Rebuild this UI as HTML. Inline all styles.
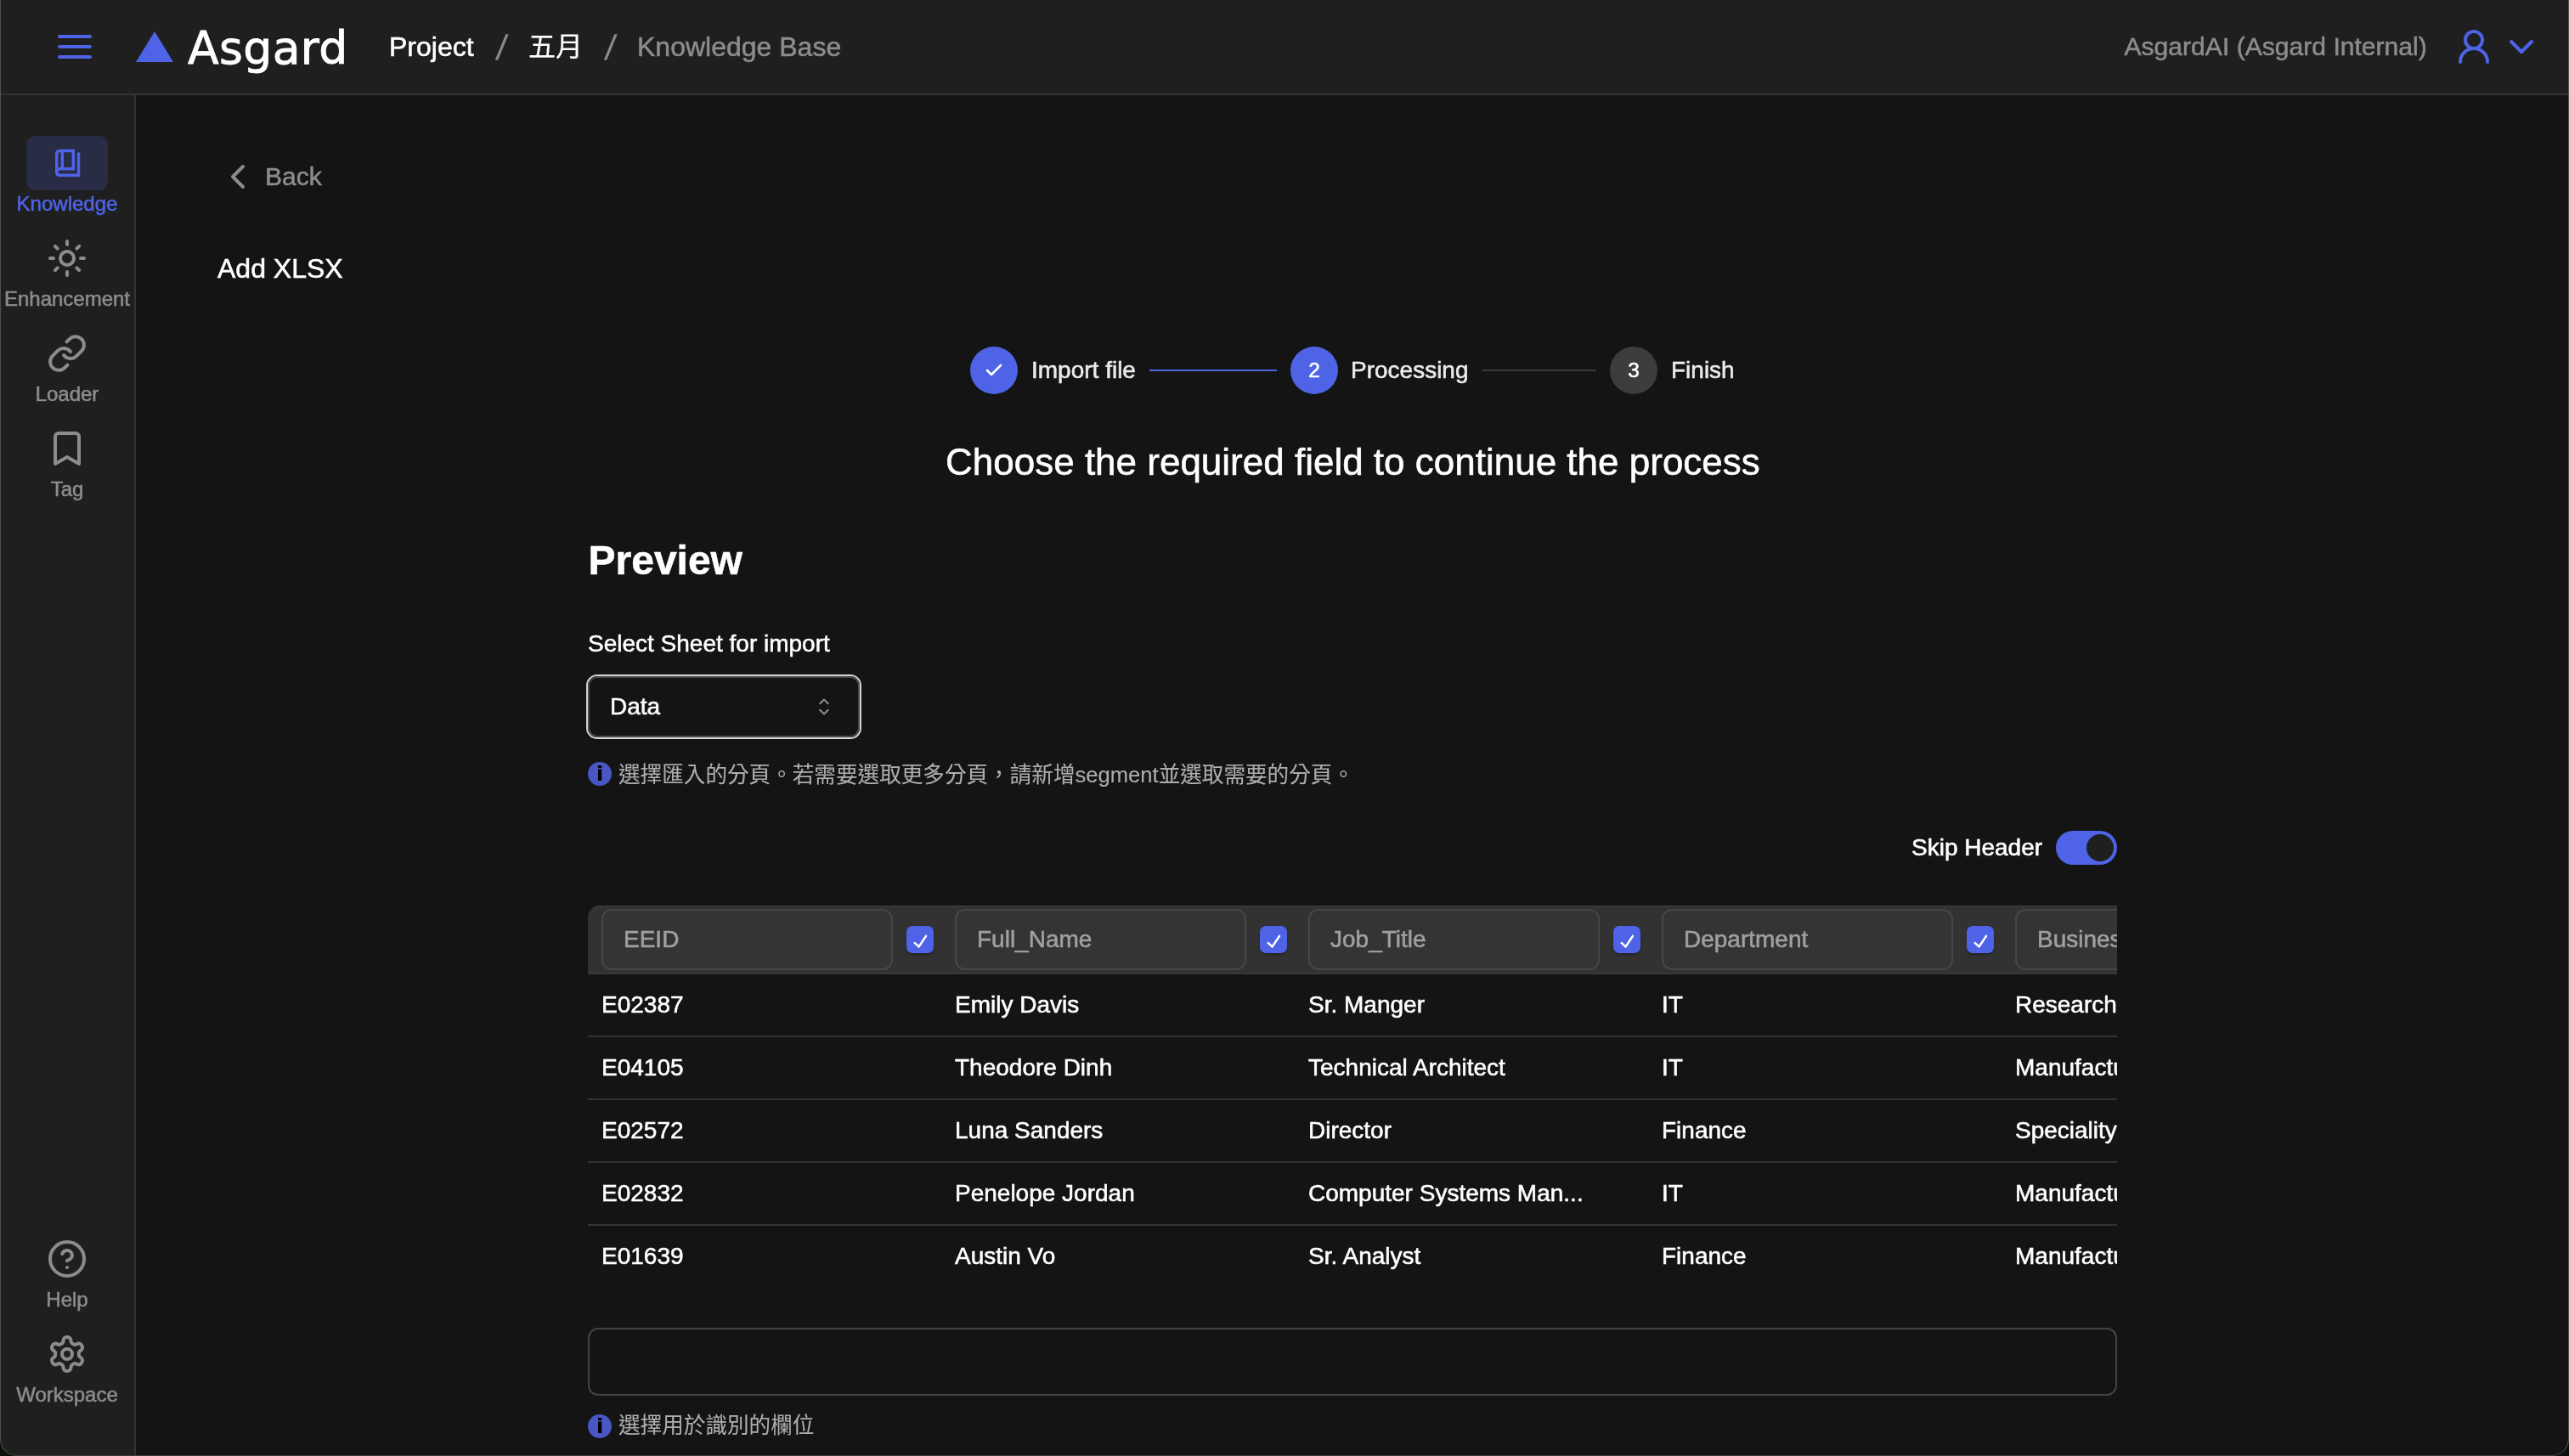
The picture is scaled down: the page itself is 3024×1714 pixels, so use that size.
<!DOCTYPE html>
<html lang="zh-Hant">
<head>
<meta charset="utf-8">
<title>Asgard - Knowledge Base</title>
<style>
*{box-sizing:border-box;margin:0;padding:0}
html,body{width:3024px;height:1714px;overflow:hidden;background:#0a120a}
body{font-family:"Liberation Sans","Noto Sans CJK TC",sans-serif;color:#fff;position:relative}
#win{position:absolute;left:0;top:0;width:3024px;height:1714px;background:#141414;overflow:hidden;border-radius:0 0 20px 20px}
#winb{position:absolute;left:0;top:-30px;width:3024px;height:1744px;border:1px solid #505050;border-bottom-color:#3c3c3c;border-top:none;border-radius:0 0 20px 20px;z-index:50;pointer-events:none}
.t{position:absolute;line-height:1;white-space:nowrap}
#win{-webkit-text-stroke:0.55px currentColor;will-change:transform}
.g{color:#8c8c8c}
svg{position:absolute;overflow:visible}
.ic{fill:none;stroke:#8c8c8c;stroke-width:2;stroke-linecap:round;stroke-linejoin:round}
.bl{stroke:#4e63e6}
#hdr{position:absolute;left:0;top:0;width:3024px;height:112px;background:#1f1f1f;border-bottom:2px solid #333}
#side{position:absolute;left:0;top:112px;width:160px;height:1602px;background:#1f1f1f;border-right:2px solid #333}
.sl{position:absolute;left:0;width:158px;text-align:center;font-size:24px;line-height:1;color:#8c8c8c}
.stc{position:absolute;top:408px;width:56px;height:56px;border-radius:50%;color:#fff;font-size:24.5px;line-height:56px;text-align:center}
.st{top:421.6px;font-size:28px;color:#ebebeb}
.stl{position:absolute;top:435px;height:2px}
#sel{position:absolute;left:690px;top:794px;width:324px;height:76px;border-radius:13px;border:2px solid #d4d4d4}
#seli{position:absolute;left:0;top:0;right:0;bottom:0;border-radius:11px;border:2px solid #4a4a4a}
.inf{font-size:25.6px;color:#adadad;line-height:28px;-webkit-text-stroke:0.1px currentColor}
#tbl{position:absolute;left:692px;top:1066px;width:1800px;height:460px;overflow:hidden;border-radius:14px 0 0 0}
#th{position:absolute;left:0;top:0;width:1800px;height:81px;background:#323232;border-top:2px solid #393939;border-bottom:2px solid #393939}
.hi{position:absolute;top:4px;width:343px;height:72px;border:2px solid #474747;border-radius:12px;background:#343434;font-size:28px;color:#a0a0a0;line-height:1;white-space:nowrap}
.hi span{position:absolute;left:24px;top:20px}
.cb{position:absolute;top:24px;width:32px;height:32px;border-radius:7px;background:#4e63e6}
.cb{box-shadow:0 2px 3px rgba(0,0,0,.25)}
.cb svg{left:0;top:0;fill:none;stroke:#fff;stroke-width:2.4}
.tr{position:absolute;left:0;width:1800px;height:74px;border-bottom:2px solid #333;font-size:28px}
.tr b{position:absolute;top:22.3px;font-weight:normal;line-height:1;white-space:nowrap}
</style>
</head>
<body>
<div id="win">

<!-- HEADER -->
<div id="hdr">
  <svg class="ic bl" style="left:64px;top:31px" width="48" height="48" viewBox="0 0 24 24"><path d="M3 6h18M3 12h18M3 18h18"/></svg>
  <svg style="left:160px;top:37px" width="44" height="36" viewBox="0 0 44 36"><path d="M22 0 L44 36 L0 36 Z" fill="#4e63e6"/></svg>
  <div class="t" id="logo" style="left:221px;top:29.6px;font-size:53.5px;letter-spacing:0.4px;font-family:'DejaVu Sans',sans-serif;-webkit-text-stroke:0.9px #fff">Asgard</div>
  <div class="t" style="left:458px;top:39.3px;font-size:32px">Project</div>
  <div class="t g" style="left:584.5px;top:35.5px;font-size:41px;transform:skewX(-8deg);-webkit-text-stroke:0.15px currentColor">/</div>
  <div class="t" style="left:622px;top:39.3px;font-size:32px;-webkit-text-stroke:0.2px currentColor">五月</div>
  <div class="t g" style="left:712.5px;top:35.5px;font-size:41px;transform:skewX(-8deg);-webkit-text-stroke:0.15px currentColor">/</div>
  <div class="t g" style="left:750px;top:39.3px;font-size:32px">Knowledge Base</div>
  <div class="t g" style="left:2500.5px;top:39.6px;font-size:30.1px">AsgardAI (Asgard Internal)</div>
  <svg class="ic bl" style="left:2888px;top:31px" width="48" height="48" viewBox="0 0 24 24"><circle cx="12" cy="8" r="5"/><path d="M20 21a8 8 0 0 0-16 0"/></svg>
  <svg class="ic bl" style="left:2944px;top:31px" width="48" height="48" viewBox="0 0 24 24"><path d="m6 9 6 6 6-6"/></svg>
</div>

<!-- SIDEBAR -->
<div id="side">
  <div style="position:absolute;left:31px;top:48px;width:96px;height:64px;border-radius:10px;background:#292c45"></div>
  <svg style="left:63px;top:62px" width="34" height="36" viewBox="63 174 34 36" fill="none" stroke="#4e63e6" stroke-width="3.4" stroke-linejoin="miter"><path d="M92.5 179.5V206.3H70.5Q66.7 206.3 66.7 202.5V181.3Q66.7 177.5 70.5 177.5H86.3V198.7H70.5Q66.7 198.7 66.7 202.5"/><path d="M73.3 177.5V198.7"/></svg>
  <div class="sl" style="top:115.7px;color:#4e63e6">Knowledge</div>

  <svg class="ic" style="left:55px;top:168px" width="48" height="48" viewBox="0 0 24 24"><circle cx="12" cy="12" r="4"/><path d="M12 2v2M12 20v2M4.93 4.93l1.41 1.41M17.66 17.66l1.41 1.41M2 12h2M20 12h2M6.34 17.66l-1.41 1.41M19.07 4.93l-1.41 1.41"/></svg>
  <div class="sl" style="top:227.7px">Enhancement</div>

  <svg class="ic" style="left:55px;top:280px" width="48" height="48" viewBox="0 0 24 24"><path d="M10 13a5 5 0 0 0 7.54.54l3-3a5 5 0 0 0-7.07-7.07l-1.72 1.71"/><path d="M14 11a5 5 0 0 0-7.54-.54l-3 3a5 5 0 0 0 7.07 7.07l1.71-1.71"/></svg>
  <div class="sl" style="top:339.7px">Loader</div>

  <svg class="ic" style="left:55px;top:392px" width="48" height="48" viewBox="0 0 24 24"><path d="m19 21-7-4-7 4V5a2 2 0 0 1 2-2h10a2 2 0 0 1 2 2v16z"/></svg>
  <div class="sl" style="top:451.7px">Tag</div>

  <svg class="ic" style="left:55px;top:1346px" width="48" height="48" viewBox="0 0 24 24"><circle cx="12" cy="12" r="10"/><path d="M9.09 9a3 3 0 0 1 5.83 1c0 2-3 3-3 3"/><path d="M12 17h.01"/></svg>
  <div class="sl" style="top:1405.7px">Help</div>

  <svg class="ic" style="left:55px;top:1458px" width="48" height="48" viewBox="0 0 24 24"><path d="M12.22 2h-.44a2 2 0 0 0-2 2v.18a2 2 0 0 1-1 1.73l-.43.25a2 2 0 0 1-2 0l-.15-.08a2 2 0 0 0-2.73.73l-.22.38a2 2 0 0 0 .73 2.73l.15.1a2 2 0 0 1 1 1.72v.51a2 2 0 0 1-1 1.74l-.15.09a2 2 0 0 0-.73 2.73l.22.38a2 2 0 0 0 2.73.73l.15-.08a2 2 0 0 1 2 0l.43.25a2 2 0 0 1 1 1.73V20a2 2 0 0 0 2 2h.44a2 2 0 0 0 2-2v-.18a2 2 0 0 1 1-1.73l.43-.25a2 2 0 0 1 2 0l.15.08a2 2 0 0 0 2.73-.73l.22-.39a2 2 0 0 0-.73-2.73l-.15-.08a2 2 0 0 1-1-1.74v-.5a2 2 0 0 1 1-1.74l.15-.09a2 2 0 0 0 .73-2.73l-.22-.38a2 2 0 0 0-2.73-.73l-.15.08a2 2 0 0 1-2 0l-.43-.25a2 2 0 0 1-1-1.73V4a2 2 0 0 0-2-2z"/><circle cx="12" cy="12" r="3"/></svg>
  <div class="sl" style="top:1517.7px">Workspace</div>
</div>

<!-- MAIN -->
<div id="main">
  <!-- back -->
  <svg class="ic" style="left:256px;top:184px" width="48" height="48" viewBox="0 0 24 24"><path d="m15 18-6-6 6-6"/></svg>
  <div class="t g" style="left:312px;top:192.6px;font-size:30px">Back</div>
  <div class="t" style="left:256px;top:300.2px;font-size:32px">Add XLSX</div>

  <!-- stepper -->
  <div class="stc" style="left:1142px;background:#4e63e6"></div>
  <svg style="left:1158px;top:424px" width="24" height="24" viewBox="0 0 24 24" fill="none" stroke="#fff" stroke-width="2.6" stroke-linecap="round" stroke-linejoin="round"><path d="M20 6 9 17l-5-5"/></svg>
  <div class="t st" style="left:1214px">Import file</div>
  <div class="stl" style="left:1353px;width:150px;background:#4e63e6"></div>
  <div class="stc" style="left:1519px;background:#4e63e6">2</div>
  <div class="t st" style="left:1590px">Processing</div>
  <div class="stl" style="left:1745px;width:134px;background:#3a3a3a"></div>
  <div class="stc" style="left:1895px;background:#3d3d3d">3</div>
  <div class="t st" style="left:1967px">Finish</div>

  <div class="t" style="left:1113px;top:521.8px;font-size:44px">Choose the required field to continue the process</div>

  <div class="t" style="left:692.5px;top:636.4px;font-size:48px;font-weight:bold">Preview</div>
  <div class="t" style="left:692px;top:743.7px;font-size:28px">Select Sheet for import</div>

  <!-- select -->
  <div id="sel"><div id="seli"></div></div>
  <div class="t" style="left:718px;top:817.6px;font-size:28px">Data</div>
  <svg style="left:954px;top:816px" width="32" height="32" viewBox="0 0 15 15" fill="none" stroke="#8c8c8c" stroke-width="0.95" stroke-linecap="round" stroke-linejoin="round"><path d="M5.25 5.75 7.5 3.5 9.75 5.75M5.25 9.25 7.5 11.5 9.75 9.25"/></svg>

  <!-- info 1 -->
  <svg style="left:692px;top:897px" width="28" height="28" viewBox="0 0 28 28"><circle cx="14" cy="14" r="14" fill="#4956c4"/><rect x="12" y="4.1" width="4.2" height="3" fill="#000"/><rect x="12" y="8.5" width="4.2" height="13.5" fill="#000"/></svg>
  <div class="t inf" style="left:728px;top:898px">選擇匯入的分頁。若需要選取更多分頁，請新增segment並選取需要的分頁。</div>

  <!-- skip header -->
  <div class="t" style="left:2250px;top:984px;font-size:28px">Skip Header</div>
  <div style="position:absolute;left:2420px;top:978px;width:72px;height:40px;border-radius:20px;background:#4e63e6"><div style="position:absolute;right:4px;top:4px;width:32px;height:32px;border-radius:50%;background:#1f1f1f"></div></div>

  <!-- table -->
  <div id="tbl">
    <div id="th"></div>
    <div class="hi" style="left:16px"><span>EEID</span></div><div class="cb" style="left:375px"><svg width="32" height="32" viewBox="0 0 32 32"><path d="M9 19.3 14.6 24.4 23.6 11"/></svg></div>
    <div class="hi" style="left:432px"><span>Full_Name</span></div><div class="cb" style="left:791px"><svg width="32" height="32" viewBox="0 0 32 32"><path d="M9 19.3 14.6 24.4 23.6 11"/></svg></div>
    <div class="hi" style="left:848px"><span>Job_Title</span></div><div class="cb" style="left:1207px"><svg width="32" height="32" viewBox="0 0 32 32"><path d="M9 19.3 14.6 24.4 23.6 11"/></svg></div>
    <div class="hi" style="left:1264px"><span>Department</span></div><div class="cb" style="left:1623px"><svg width="32" height="32" viewBox="0 0 32 32"><path d="M9 19.3 14.6 24.4 23.6 11"/></svg></div>
    <div class="hi" style="left:1680px"><span>Business_Unit</span></div>

    <div class="tr" style="top:81px"><b style="left:16px">E02387</b><b style="left:432px">Emily Davis</b><b style="left:848px">Sr. Manger</b><b style="left:1264px">IT</b><b style="left:1680px">Research &amp; Development</b></div>
    <div class="tr" style="top:155px"><b style="left:16px">E04105</b><b style="left:432px">Theodore Dinh</b><b style="left:848px">Technical Architect</b><b style="left:1264px">IT</b><b style="left:1680px">Manufacturing</b></div>
    <div class="tr" style="top:229px"><b style="left:16px">E02572</b><b style="left:432px">Luna Sanders</b><b style="left:848px">Director</b><b style="left:1264px">Finance</b><b style="left:1680px">Speciality Products</b></div>
    <div class="tr" style="top:303px"><b style="left:16px">E02832</b><b style="left:432px">Penelope Jordan</b><b style="left:848px">Computer Systems Man...</b><b style="left:1264px">IT</b><b style="left:1680px">Manufacturing</b></div>
    <div class="tr" style="top:377px;border-bottom:none"><b style="left:16px">E01639</b><b style="left:432px">Austin Vo</b><b style="left:848px">Sr. Analyst</b><b style="left:1264px">Finance</b><b style="left:1680px">Manufacturing</b></div>
  </div>

  <!-- bottom input -->
  <div style="position:absolute;left:692px;top:1563px;width:1800px;height:80px;border:2px solid #434343;border-radius:12px"></div>
  <svg style="left:692px;top:1665px" width="28" height="28" viewBox="0 0 28 28"><circle cx="14" cy="14" r="14" fill="#4956c4"/><rect x="12" y="4.1" width="4.2" height="3" fill="#000"/><rect x="12" y="8.5" width="4.2" height="13.5" fill="#000"/></svg>
  <div class="t inf" style="left:728px;top:1664px">選擇用於識別的欄位</div>
</div>

</div>
<div id="winb"></div>
</body>
</html>
